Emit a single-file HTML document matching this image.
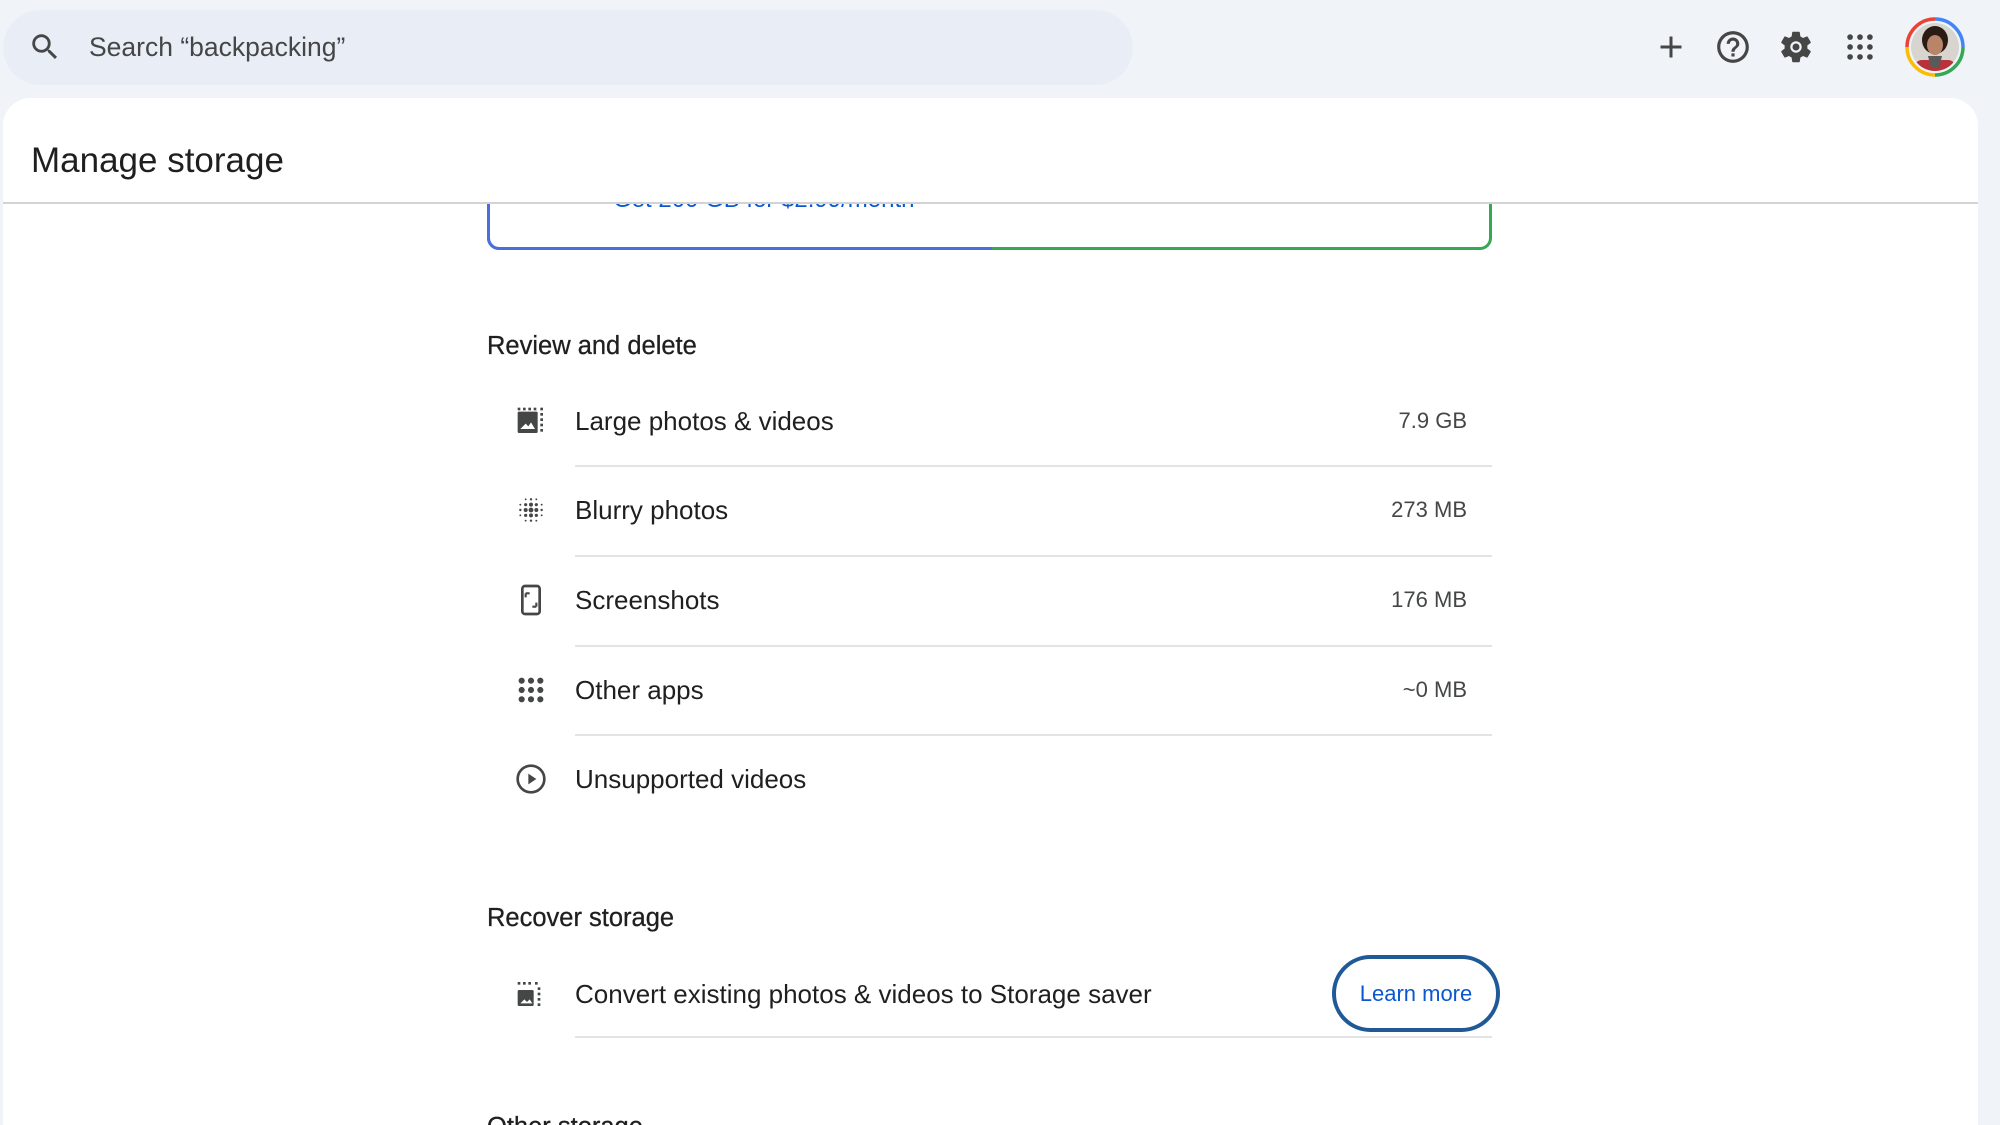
<!DOCTYPE html>
<html><head><meta charset="utf-8"><style>
*{margin:0;padding:0;box-sizing:border-box}
html,body{width:2000px;height:1125px;overflow:hidden}
body{background:#f0f4f9;font-family:"Liberation Sans",Arial,sans-serif;color:#1f1f1f;position:relative}
.abs{position:absolute}
.search{left:3px;top:10px;width:1130px;height:75px;border-radius:38px;background:#e9eef6}
.card{left:3px;top:98px;width:1975px;height:1027px;background:#fff;border-radius:28px 28px 0 0;overflow:hidden}
.row{position:absolute;left:487px;width:1005px;height:90px}
.row .ic{position:absolute;left:28px;top:29px;width:32px;height:32px}
.row .t{position:absolute;left:88px;top:0;line-height:90px;font-size:26px;color:#1f1f1f}
.row .s{position:absolute;right:25px;top:0;line-height:90px;font-size:22px;color:#444746}
.div{position:absolute;left:575px;width:917px;height:2px;background:#e3e3e3}
h3{position:absolute;font-size:25.5px;font-weight:normal;color:#1f1f1f;-webkit-text-stroke:0.3px #1f1f1f}
</style></head><body>
<div class="abs search"></div>
<svg class="abs" style="left:28px;top:30px" width="34" height="34" viewBox="0 0 24 24"><path fill="#444746" d="M15.5 14h-.79l-.28-.27A6.47 6.47 0 0016 9.5 6.5 6.5 0 109.5 16c1.61 0 3.09-.59 4.23-1.57l.27.28v.79l5 4.99L20.49 19l-4.99-5zm-6 0C7.01 14 5 11.99 5 9.5S7.01 5 9.5 5 14 7.01 14 9.5 11.99 14 9.5 14z"/></svg>
<div class="abs" style="left:89px;top:32px;font-size:26.5px;color:#444746">Search “backpacking”</div>
<svg class="abs" style="left:1653px;top:29px" width="36" height="36" viewBox="0 0 24 24"><path fill="#444746" d="M19 13h-6v6h-2v-6H5v-2h6V5h2v6h6v2z"/></svg>
<svg class="abs" style="left:1714px;top:28px" width="38" height="38" viewBox="0 0 24 24"><path fill="#444746" d="M11 18h2v-2h-2v2zm1-16C6.48 2 2 6.48 2 12s4.48 10 10 10 10-4.48 10-10S17.520 2 12 2zm0 18c-4.41 0-8-3.590-8-8s3.590-8 8-8 8 3.590 8 8-3.590 8-8 8zm0-14c-2.21 0-4 1.79-4 4h2c0-1.1.9-2 2-2s2 .9 2 2c0 2-3 1.75-3 5h2c0-2.25 3-2.5 3-5 0-2.21-1.79-4-4-4z"/></svg>
<svg class="abs" style="left:1777px;top:28px" width="38" height="38" viewBox="0 0 24 24"><path fill="#444746" d="M19.14 12.94c.04-.3.06-.61.06-.94 0-.32-.02-.64-.07-.94l2.030-1.58a.49.49 0 00.12-.61l-1.92-3.32a.49.49 0 00-.59-.22l-2.39.96c-.5-.38-1.03-.7-1.62-.94l-.36-2.54a.48.48 0 00-.48-.41h-3.84c-.24 0-.43.17-.47.41l-.36 2.54c-.59.24-1.13.57-1.62.94l-2.39-.96a.48.48 0 00-.59.22L2.74 8.87c-.12.21-.08.47.12.61l2.03 1.58c-.05.3-.09.63-.09.94s.02.64.07.94l-2.03 1.58a.49.49 0 00-.12.61l1.92 3.32c.12.22.37.29.59.22l2.39-.96c.5.38 1.03.7 1.62.94l.36 2.54c.05.24.24.41.48.41h3.84c.24 0 .44-.17.47-.41l.36-2.54c.59-.24 1.13-.56 1.62-.94l2.39.96c.22.08.47 0 .59-.22l1.92-3.32c.12-.22.07-.47-.12-.61l-2.01-1.58zM12 15.6c-1.98 0-3.6-1.62-3.6-3.6s1.62-3.6 3.6-3.6 3.6 1.62 3.6 3.6-1.62 3.6-3.6 3.6z"/><circle cx="12" cy="12" r="2.2" fill="#444746"/></svg>
<svg class="abs" style="left:1843px;top:30px" width="34" height="34" viewBox="0 0 24 24"><g fill="#444746"><circle cx="5" cy="5" r="2"/><circle cx="12" cy="5" r="2"/><circle cx="19" cy="5" r="2"/><circle cx="5" cy="12" r="2"/><circle cx="12" cy="12" r="2"/><circle cx="19" cy="12" r="2"/><circle cx="5" cy="19" r="2"/><circle cx="12" cy="19" r="2"/><circle cx="19" cy="19" r="2"/></g></svg>
<svg class="abs" style="left:1904px;top:16px" width="62" height="62" viewBox="0 0 62 62">
<path d="M31 3A28 28 0 0 1 59 31" stroke="#4285f4" stroke-width="3.5" fill="none"/>
<path d="M59 31A28 28 0 0 1 31 59" stroke="#34a853" stroke-width="3.5" fill="none"/>
<path d="M31 59A28 28 0 0 1 3 31" stroke="#fbbc04" stroke-width="3.5" fill="none"/>
<path d="M3 31A28 28 0 0 1 31 3" stroke="#ea4335" stroke-width="3.5" fill="none"/>
<clipPath id="c"><circle cx="31" cy="31" r="24"/></clipPath>
<g clip-path="url(#c)"><rect width="62" height="62" fill="#d8d4cf"/><ellipse cx="31" cy="24" rx="13" ry="14" fill="#2a1b15"/><ellipse cx="31" cy="29" rx="8" ry="10" fill="#b98468"/><rect x="10" y="44" width="42" height="20" rx="8" fill="#b8323a"/><path d="M24 40h14l-3 12h-8z" fill="#5a5a58"/></g></svg>

<div class="abs card">
  <div class="abs" style="left:484px;top:40px;width:1005px;height:112px;border:3px solid;border-color:transparent #34a853 #34a853 #4a6fd8;border-radius:12px;"></div>
  <div class="abs" style="left:484px;top:40px;width:505px;height:112px;border:3px solid;border-color:transparent transparent #4a6fd8 #4a6fd8;border-radius:12px 0 0 12px;border-right:none"></div>
  <div class="abs" style="left:610px;top:88px;font-size:24px;color:#0b57d0">Get 200 GB for $2.99/month</div>
  <div class="abs" style="left:0;top:0;width:1975px;height:106px;background:#fff;border-bottom:2px solid #d3d3d3"></div>
  <div class="abs" style="left:28px;top:43px;font-size:35px;color:#1f1f1f">Manage storage</div>
</div>

<h3 style="left:487px;top:332px">Review and delete</h3>
<div class="row" style="top:376px"><svg class="ic" viewBox="0 0 24 24"><g fill="#444746"><rect x="2" y="5" width="15" height="16" rx="1"/><rect x="2" y="2" width="2" height="2"/><rect x="6" y="2" width="2" height="2"/><rect x="10" y="2" width="2" height="2"/><rect x="14" y="2" width="2" height="2"/><rect x="19" y="2" width="2" height="2"/><rect x="19" y="6" width="2" height="2"/><rect x="19" y="10" width="2" height="2"/><rect x="19" y="14" width="2" height="2"/><rect x="19" y="18" width="2" height="2"/></g><path d="M4 18l4-4 2 2 2-3 3 5z" fill="#fff"/></svg><div class="t">Large photos &amp; videos</div><div class="s">7.9 GB</div></div>
<div class="div" style="top:465px"></div>
<div class="row" style="top:465px"><svg class="ic" viewBox="0 0 24 24"><g fill="#444746"><circle cx="12" cy="12" r="1.8"/><circle cx="8" cy="12" r="1.5"/><circle cx="16" cy="12" r="1.5"/><circle cx="12" cy="8" r="1.5"/><circle cx="12" cy="16" r="1.5"/><circle cx="8" cy="8" r="1.2"/><circle cx="16" cy="8" r="1.2"/><circle cx="8" cy="16" r="1.2"/><circle cx="16" cy="16" r="1.2"/><circle cx="4" cy="12" r=".9"/><circle cx="20" cy="12" r=".9"/><circle cx="12" cy="4" r=".9"/><circle cx="12" cy="20" r=".9"/><circle cx="4" cy="8" r=".7"/><circle cx="20" cy="8" r=".7"/><circle cx="4" cy="16" r=".7"/><circle cx="20" cy="16" r=".7"/><circle cx="8" cy="4" r=".7"/><circle cx="16" cy="4" r=".7"/><circle cx="8" cy="20" r=".7"/><circle cx="16" cy="20" r=".7"/></g></svg><div class="t">Blurry photos</div><div class="s">273 MB</div></div>
<div class="div" style="top:555px"></div>
<div class="row" style="top:555px"><svg class="ic" viewBox="0 0 24 24"><rect x="5.5" y="1.5" width="13" height="21" rx="2" fill="none" stroke="#444746" stroke-width="2"/><path d="M8 7h3M8 7v3M16 17h-3M16 17v-3" stroke="#444746" stroke-width="1.6" fill="none"/></svg><div class="t">Screenshots</div><div class="s">176 MB</div></div>
<div class="div" style="top:645px"></div>
<div class="row" style="top:645px"><svg class="ic" viewBox="0 0 24 24"><g fill="#444746"><circle cx="5" cy="5" r="2.3"/><circle cx="12" cy="5" r="2.3"/><circle cx="19" cy="5" r="2.3"/><circle cx="5" cy="12" r="2.3"/><circle cx="12" cy="12" r="2.3"/><circle cx="19" cy="12" r="2.3"/><circle cx="5" cy="19" r="2.3"/><circle cx="12" cy="19" r="2.3"/><circle cx="19" cy="19" r="2.3"/></g></svg><div class="t">Other apps</div><div class="s">~0 MB</div></div>
<div class="div" style="top:734px"></div>
<div class="row" style="top:734px"><svg class="ic" viewBox="0 0 24 24"><circle cx="12" cy="12" r="10" fill="none" stroke="#444746" stroke-width="2"/><path d="M10 8l6 4-6 4z" fill="#444746"/></svg><div class="t">Unsupported videos</div></div>

<h3 style="left:487px;top:904px">Recover storage</h3>
<div class="row" style="top:949px"><svg class="ic" viewBox="0 0 24 24"><g fill="#444746"><rect x="2" y="9" width="12" height="12" rx="1"/><rect x="2" y="3" width="2" height="2"/><rect x="6" y="3" width="2" height="2"/><rect x="10" y="3" width="2" height="2"/><rect x="15" y="3" width="2" height="2"/><rect x="17" y="7" width="2" height="2"/><rect x="17" y="11" width="2" height="2"/><rect x="17" y="15" width="2" height="2"/><rect x="17" y="19" width="2" height="2"/></g><path d="M4 19l3-3 2 2 2-2 2 3z" fill="#fff"/></svg><div class="t">Convert existing photos &amp; videos to Storage saver</div></div>
<div class="abs" style="left:1332px;top:955px;width:168px;height:77px;border:4px solid #1f5a96;border-radius:40px;text-align:center;line-height:69px;font-size:22px;color:#0b57d0">Learn more</div>
<div class="div" style="top:1036px"></div>
<h3 style="left:487px;top:1113px">Other storage</h3>
</body></html>
